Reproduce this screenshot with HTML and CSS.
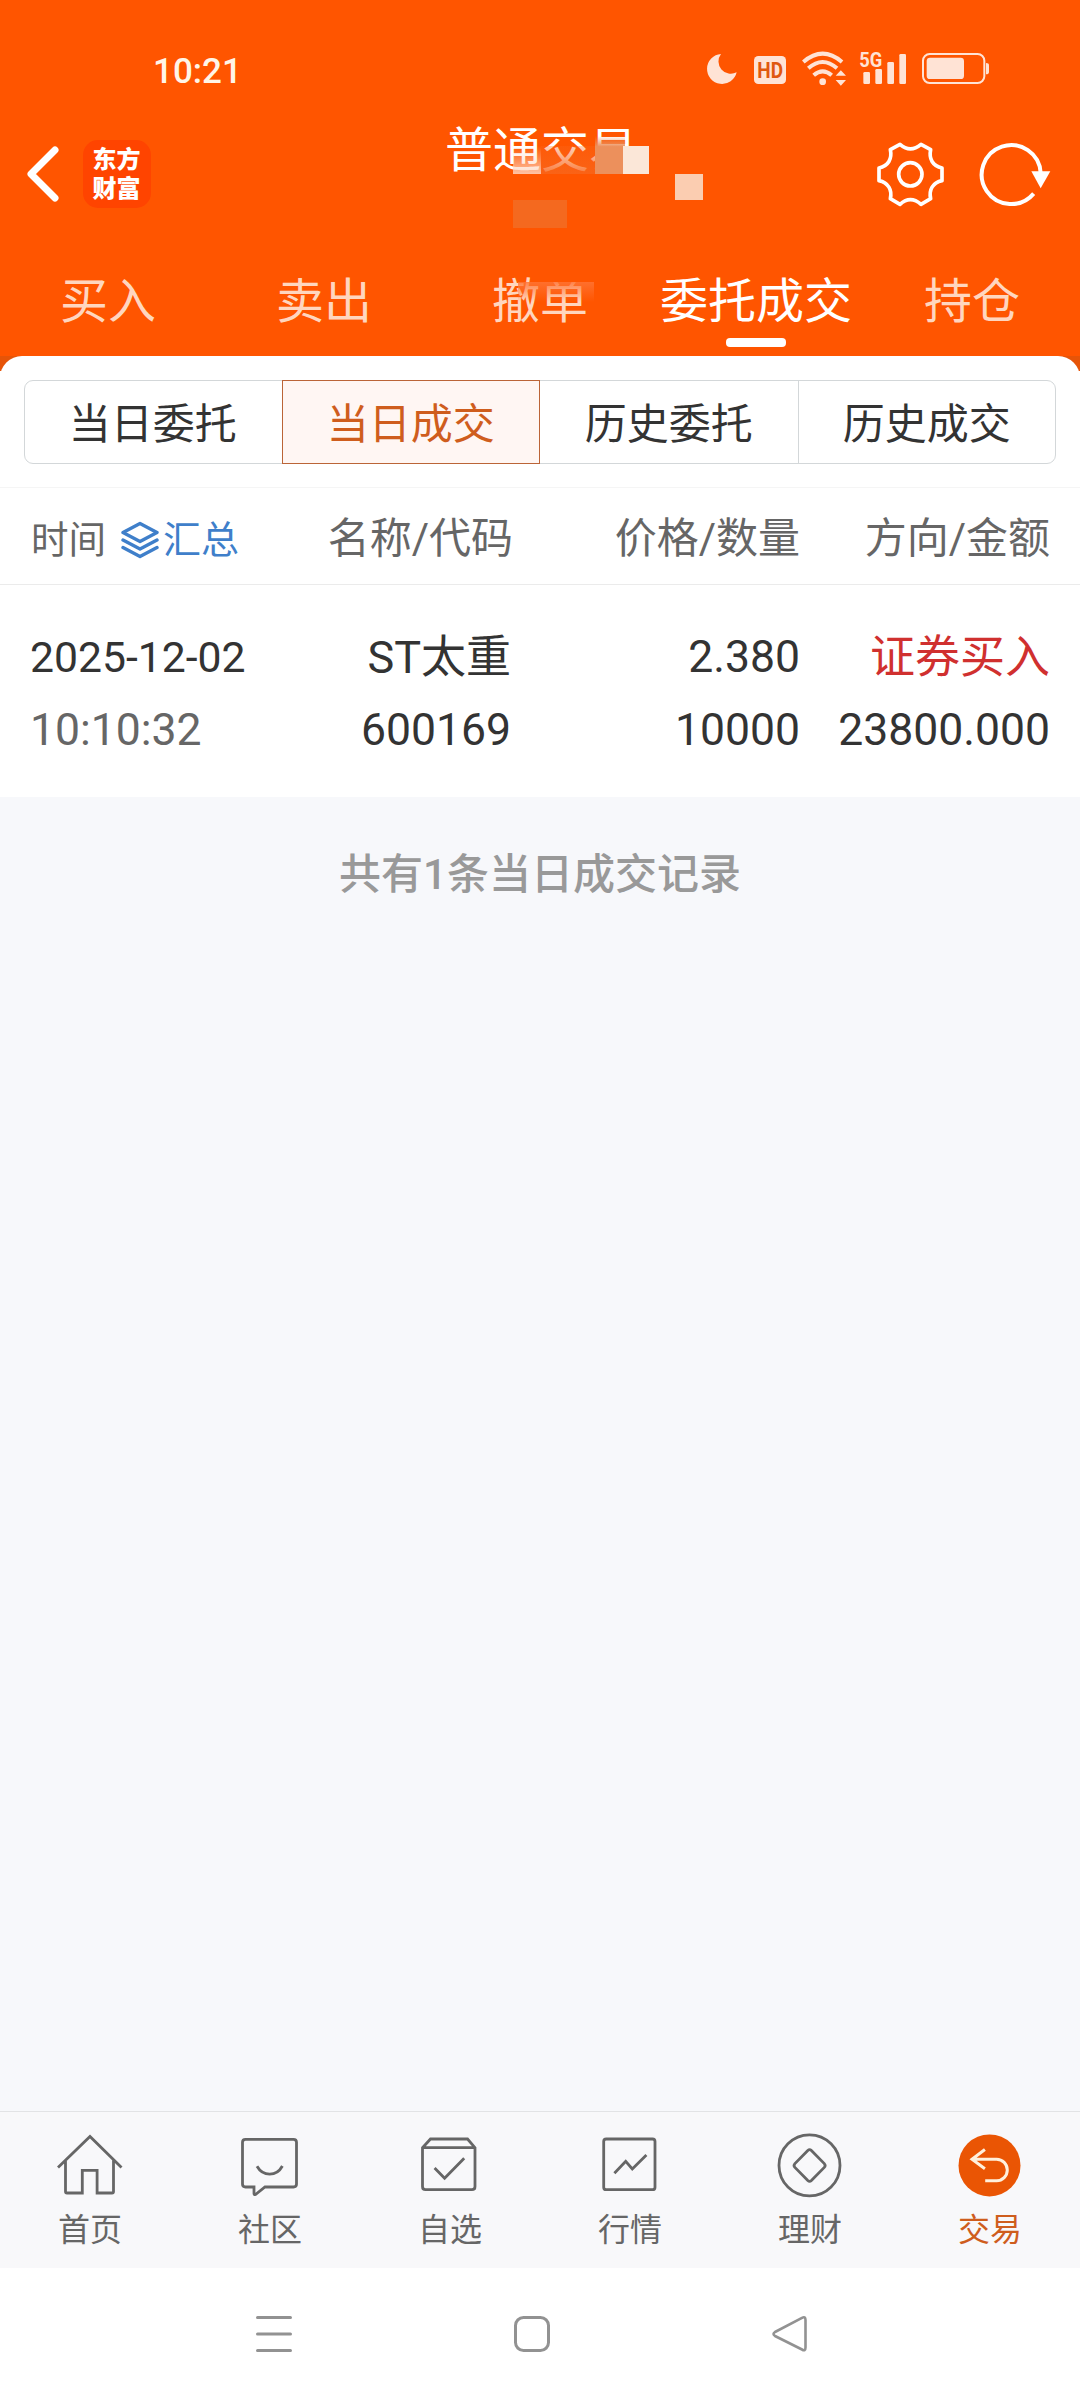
FILE: index.html
```html
<!DOCTYPE html>
<html lang="zh-CN">
<head>
<meta charset="utf-8">
<title>普通交易</title>
<link rel="stylesheet" href="styles.css">
</head>
<body>
<div class="app">
  <header class="top">
    <div class="status">
      <span class="clock">10:21</span>
      <svg class="status-icons" viewBox="78 45 852 126" width="284" height="42">
        <g fill="#ffe3d5">
          <path d="M123 72A45 45 0 1 0 170 127A37 37 0 0 1 123 72Z"/>
          <rect x="222" y="78" width="96" height="84" rx="13"/>
          <circle cx="428" cy="155" r="10"/>
          <path d="M467 137H498L482.500 121ZM467 150H498L482.500 167Z"/>
          <rect x="550" y="126" width="20" height="36" rx="4"/>
          <rect x="586" y="117" width="20" height="45" rx="4"/>
          <rect x="622" y="96" width="20" height="66" rx="4"/>
          <rect x="658" y="72" width="20" height="90" rx="4"/>
          <rect x="740" y="83" width="112" height="64" rx="10"/>
          <path d="M918 99Q927 99 927 106V126Q927 133 918 133Z"/>
          <text class="sig" x="538" y="110" textLength="69" lengthAdjust="spacingAndGlyphs">5G</text>
        </g>
        <text class="hd" x="232" y="143" textLength="77" lengthAdjust="spacingAndGlyphs">HD</text>
        <g fill="none" stroke="#ffe3d5">
          <path stroke-width="12" d="M370 96Q428 46 486 96M385 115Q428 77 471 115M401 136Q428 112 455 136"/>
          <rect x="729" y="72" width="184" height="87" rx="20" stroke-width="6"/>
        </g>
      </svg>
    </div>
    <div class="titlebar">
      <div class="left">
        <svg width="34" height="60" viewBox="0 0 34 60" fill="none" stroke="#fff" stroke-width="7" stroke-linecap="round" stroke-linejoin="round"><path d="M28 6L4 30L28 54"/></svg>
        <div class="logo">东方<br>财富</div>
      </div>
      <div class="title">普通交易
        <i class="m m1"></i><i class="m m2"></i><i class="m m3"></i><i class="m m4"></i><i class="m m5"></i><i class="m m6"></i>
      </div>
      <div class="right">
        <svg width="69" height="69" viewBox="588 329 207 207" fill="none" stroke="#fff" stroke-width="11" stroke-linejoin="round">
          <path d="M660 342Q691 369 723 342L752 358C746 385 758 407 786 413V451C758 457 746 479 752 505L723 522Q691 494 660 522L631 505C637 479 625 457 597 451V413C625 407 637 385 631 358Z"/>
          <circle cx="691" cy="432" r="35"/>
        </svg>
        <svg width="75" height="69" viewBox="893 329 225 207">
          <path d="M1081 428A88.500 88.500 0 1 0 1060 490" fill="none" stroke="#fff" stroke-width="12"/>
          <path d="M1053 423H1110L1081 474Z" fill="#fff"/>
        </svg>
      </div>
    </div>
    <nav class="tabs">
      <span>买入</span><span>卖出</span><span>撤单<i class="m m7"></i><i class="m m8"></i></span><span class="on">委托成交</span><span>持仓</span>
    </nav>
  </header>
  <div class="sheet-wrap">
    <main class="sheet">
      <div class="segment">
        <span>当日委托</span><span class="on">当日成交</span><span>历史委托</span><span>历史成交</span>
      </div>
      <div class="row head">
        <div class="time">时间
          <svg width="38" height="38" viewBox="0 0 38 38" fill="none" stroke="#3f7fca" stroke-width="3.400" stroke-linejoin="round" stroke-linecap="round"><path d="M19 2.500L36 11.500L19 20.500L2 11.500ZM2 19L19 28L36 19M2 26.500L19 35.500L36 26.500"/></svg><b>汇总</b></div>
        <span>名称/代码</span><span>价格/数量</span><span>方向/金额</span>
      </div>
      <div class="record">
        <div class="row"><span class="date">2025-12-02</span><span class="name">ST太重</span><span>2.380</span><span class="buy">证券买入</span></div>
        <div class="row"><span class="sub">10:10:32</span><span>600169</span><span>10000</span><span>23800.000</span></div>
      </div>
    </main>
  </div>
  <p class="count">共有1条当日成交记录</p>
  <nav class="bottom">
    <div><svg viewBox="0 0 72 72"><path d="M4 37.500L36 6.500L67.500 37.500M11.500 30.500V61.500Q11.500 63 13 63H28.300V40.300H43.100V63H58Q59.500 63 59.500 61.500V30.500"/></svg>首页</div>
    <div><svg viewBox="0 0 72 72"><path d="M11.500 9.300H59.500Q62.500 9.300 62.500 12.300V54Q62.500 57 59.500 57H31L21.500 64.500Q20 65 20 63.500V57H11.500Q8.500 57 8.500 54V12.300Q8.500 9.300 11.500 9.300Z"/><path d="M23 36.300Q27.500 44.200 35.700 44.200T48.400 36"/></svg>社区</div>
    <div><svg viewBox="0 0 72 72"><path d="M8.500 17.700L16.500 9H53.500L61 17.700V56.500Q61 59.700 58 59.700H11.500Q8.500 59.700 8.500 56.500ZM8.500 17.700H61M20.600 38L30.600 48.300L50.200 28.300"/></svg>自选</div>
    <div><svg viewBox="0 0 72 72"><rect x="9.700" y="9" width="51.300" height="50.700" rx="2.500"/><path d="M20.400 43.300L31.700 31.300L38.300 39L52.400 25"/></svg>行情</div>
    <div><svg viewBox="0 0 72 72"><circle cx="35.500" cy="35.400" r="30.500"/><path d="M33.800 20.500Q35.600 18.800 37.400 20.500L50.300 33.600Q52 35.500 50.300 37.400L37.400 50.500Q35.600 52.200 33.800 50.500L20.900 37.400Q19.200 35.500 20.900 33.600Z"/></svg>理财</div>
    <div class="on"><svg viewBox="0 0 72 72"><circle cx="35.500" cy="35.400" r="31" fill="#ea5504" stroke="none"/><path stroke="#fff0dc" stroke-width="3" d="M30.900 19.500L18 29.300L30.900 38.700M18 29.300H42.600A10.700 10.700 0 0 1 42.600 50.700H31.200"/></svg>交易</div>
  </nav>
  <footer class="sys">
    <svg viewBox="0 0 40 40" stroke-linecap="round"><path d="M3.500 3.500H36.500M3.500 20H36.500M3.500 36.500H36.500"/></svg>
    <svg viewBox="0 0 40 40"><rect x="3.500" y="3.500" width="33" height="33" rx="8"/></svg>
    <svg viewBox="0 0 40 40" stroke-linejoin="round"><path d="M32 3.800Q35.500 2 35.500 6V33.500Q35.500 37.500 32 35.500L5 22Q2 20 5 18Z" stroke-width="2.600"/></svg>
  </footer>
</div>
</body>
</html>
```
FILE: styles.css
```css
* { box-sizing: border-box; }
body {
  margin: 0;
  font-family: Roboto, "Noto Sans CJK SC", sans-serif;
  color: #333;
  background: #f7f8fb;
}
svg { display: block; flex: none; }
.app { width: 1080px; height: 2400px; display: flex; flex-direction: column; }

/* Header */
.top { height: 356px; background: #ff5500; color: #fff; }
.status {
  height: 120px;
  padding: 45px 90px 0 153px;
  display: flex;
  justify-content: space-between;
}
.clock { font-size: 35px; line-height: 53px; font-weight: 500; color: #fff5e8; }
.status-icons { font-family: Roboto, sans-serif; font-weight: 700; }
.sig { font-size: 60px; }
.hd { font-size: 64px; fill: #e0580f; }

.titlebar {
  height: 108px;
  padding: 0 27px;
  display: grid;
  grid-template-columns: 1fr auto 1fr;
}
.left, .right { display: flex; align-items: center; }
.left { gap: 22px; }
.right { justify-content: flex-end; gap: 33px; }
.logo {
  width: 68px;
  height: 68px;
  border-radius: 15px;
  background: #ff4400;
  text-align: center;
  padding: 3px 1px 0 0;
  font: 900 24px/29px "Noto Sans CJK SC", sans-serif;
}
.title { position: relative; font-size: 48px; line-height: 62px; left: 1px; }

/* Pixelated patches over the account name */
.m { position: absolute; display: block; }
.m1 { left: 68px; top: 26px; width: 28px; height: 28px; background: linear-gradient(rgba(255,210,185,0), rgba(255,215,195,.85)); }
.m2 { left: 96px; top: 26px; width: 54px; height: 28px; background: linear-gradient(rgba(250,103,28,.3), rgba(249,101,26,.85)); }
.m3 { left: 150px; top: 16px; width: 30px; height: 38px; background: linear-gradient(rgba(240,120,60,0), #ec905c 28%); }
.m4 { left: 178px; top: 26px; width: 26px; height: 28px; background: #fbe7d8; }
.m5 { left: 230px; top: 54px; width: 28px; height: 26px; background: #fbcdb1; }
.m6 { left: 68px; top: 80px; width: 54px; height: 28px; background: #f4691f; }
.m7 { left: 86px; top: 54px; width: 76px; height: 20px; background: linear-gradient(rgba(255,116,52,.85), rgba(255,95,20,0)); }
.m8 { left: 108px; top: 44px; width: 55px; height: 10px; background: #ff5500; }

.tabs { height: 128px; display: grid; grid-template-columns: repeat(5, 1fr); }
.tabs span {
  position: relative;
  text-align: center;
  font-size: 48px;
  line-height: 148px;
  color: #ffd6bf;
  white-space: nowrap;
}
.tabs .on { color: #fff; }
.tabs .on::after {
  content: "";
  position: absolute;
  left: 78px;
  top: 110px;
  width: 60px;
  height: 9px;
  border-radius: 4px;
  background: #fff;
}

/* Trade records */
.sheet-wrap { background: linear-gradient(#e65408 15px, #fff 15px); }
.sheet { height: 441px; background: #fff; border-radius: 22px 22px 0 0; padding-top: 24px; }
.segment {
  height: 84px;
  margin: 0 24px 23px;
  border: 1px solid #d3d7d9;
  border-radius: 9px;
  display: grid;
  grid-template-columns: repeat(4, 1fr);
}
.segment span { text-align: center; font-size: 42px; line-height: 87px; height: 82px; border-left: 1px solid #d3d7d9; }
.segment span:first-child { border-left: 0; padding-right: 2px; }
.segment .on { margin: -1px 0 -1px -1px; height: 84px; border: 1px solid #bb6437; background: #fff6f3; color: #cf5d1d; }
.segment .on + span { border-left: 0; }

.row {
  display: grid;
  grid-template-columns: 220px 261px 289px 250px;
  padding: 0 30px;
  text-align: right;
  white-space: nowrap;
}
.row > :first-child { text-align: left; }
.head {
  height: 98px;
  border-top: 1px solid #f5f5f5;
  border-bottom: 1px solid #ebebeb;
  font-size: 42px;
  line-height: 101px;
  color: #666;
}
.head > span:nth-child(2) { margin-right: -2px; }
.time { display: flex; align-items: center; font-size: 37.500px; padding: 3px 0 0 1px; height: 101px; }
.time svg { margin: 0 4px 0 15px; }
.time b { font-weight: 400; font-size: 38px; color: #3f7fca; }
.record { padding-top: 36px; font-size: 44.500px; line-height: 73px; }
.date { font-size: 42.700px; }
.name, .buy { font-size: 45px; }
.sub { color: #666; }
.buy { color: #d0302f; }

.count {
  flex: 1;
  margin: 0;
  padding-top: 48px;
  text-align: center;
  font-size: 42px;
  line-height: 60px;
  font-weight: 500;
  color: #999;
  background: #f7f8fb;
}

/* App navigation */
.bottom {
  height: 157px;
  border-top: 1px solid #e2e3e5;
  background: #f8f8fa;
  display: grid;
  grid-template-columns: repeat(6, 1fr);
  padding-top: 18px;
}
.bottom div {
  display: flex;
  flex-direction: column;
  align-items: center;
  font-size: 32px;
  line-height: 56px;
  color: #666;
}
.bottom svg { width: 72px; height: 72px; fill: none; stroke: #666; stroke-width: 2.8; }
.bottom .on { color: #cf5d1d; }

/* System navigation */
.sys {
  height: 132px;
  background: #fff;
  display: flex;
  justify-content: center;
  align-items: center;
  gap: 218px;
  padding-right: 16px;
}
.sys svg { width: 40px; height: 40px; fill: none; stroke: #929292; stroke-width: 3; }
```
